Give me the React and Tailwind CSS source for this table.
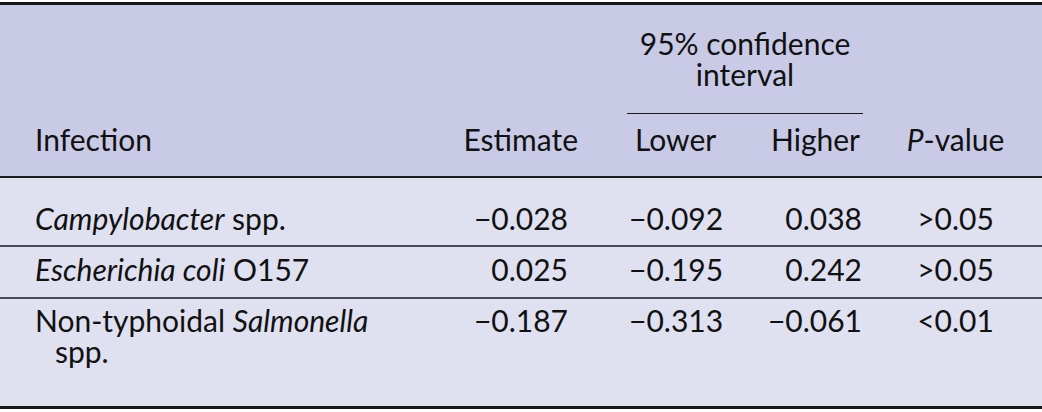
const ROWS = [
  {
    id: 'campy',
    name: <><i>Campylobacter</i> spp.</>,
    est: '−0.028',
    lo: '−0.092',
    hi: '0.038',
    p: '>0.05',
    pad: 'pt-[25px] pb-[11px]',
  },
  {
    id: 'ecoli',
    name: <><i>Escherichia coli</i> O157</>,
    est: '0.025',
    lo: '−0.195',
    hi: '0.242',
    p: '>0.05',
    pad: 'pt-[7px] pb-[12px]',
  },
  {
    id: 'salmonella',
    name: <>Non-typhoidal <i>Salmonella</i> spp.</>,
    est: '−0.187',
    lo: '−0.313',
    hi: '−0.061',
    p: '<0.01',
    pad: 'pt-[6px] pb-[39px]',
  },
]

export default function App() {
  return (
    <div className="w-[1042px] h-[412px] bg-white pt-[2px] font-['Lato','Open_Sans',sans-serif] text-[30px] leading-[31px] text-[#111]">
      <div className="border-t-[3px] border-b-[3px] border-[#161616] bg-[#dfe0f0]">
        <table className="w-full table-fixed border-collapse">
          <colgroup>
            <col className="w-[463px]" />
            <col className="w-[164px]" />
            <col className="w-[118px]" />
            <col className="w-[132px]" />
            <col className="w-[165px]" />
          </colgroup>

          {/* Header */}
          <thead className="bg-[#c9cae5]">
            <tr>
              <th rowSpan={2} className="align-bottom text-left font-normal pl-[35px] pb-[21px] border-b-2 border-[#1c1c1c]">
                Infection
              </th>
              <th rowSpan={2} className="align-bottom text-right font-normal pr-[49px] pb-[21px] border-b-2 border-[#1c1c1c]">
                Estimate
              </th>
              <th colSpan={2} className="align-top font-normal pt-[23px] p-0">
                <div className="mr-[14px] pb-[23px] border-b border-[#1c1c1c] text-center">
                  95% confidence
                  <br />
                  interval
                </div>
              </th>
              <th rowSpan={2} className="align-bottom text-center font-normal pr-[8px] pb-[21px] border-b-2 border-[#1c1c1c]">
                <i>P</i>-value
              </th>
            </tr>
            <tr>
              <th className="text-left font-normal pl-2 pt-[10px] pb-[21px] border-b-2 border-[#1c1c1c]">Lower</th>
              <th className="text-right font-normal pr-[17px] pt-[10px] pb-[21px] border-b-2 border-[#1c1c1c]">Higher</th>
            </tr>
          </thead>

          {/* Body */}
          <tbody>
            {ROWS.map((row, i) => {
              const line = i < ROWS.length - 1 ? 'border-b-2 border-[#4b4b56]' : ''
              return (
                <tr key={row.id}>
                  <td className={`align-top ${row.pad} ${line}`}>
                    <div className="w-[395px] pl-[55px] -indent-[20px]">{row.name}</div>
                  </td>
                  <td className={`align-top text-right pr-[59px] ${row.pad} ${line}`}>{row.est}</td>
                  <td className={`align-top text-left pl-[2px] ${row.pad} ${line}`}>{row.lo}</td>
                  <td className={`align-top text-right pr-[15px] ${row.pad} ${line}`}>{row.hi}</td>
                  <td className={`align-top text-center pr-[8px] ${row.pad} ${line}`}>{row.p}</td>
                </tr>
              )
            })}
          </tbody>
        </table>
      </div>
    </div>
  )
}
